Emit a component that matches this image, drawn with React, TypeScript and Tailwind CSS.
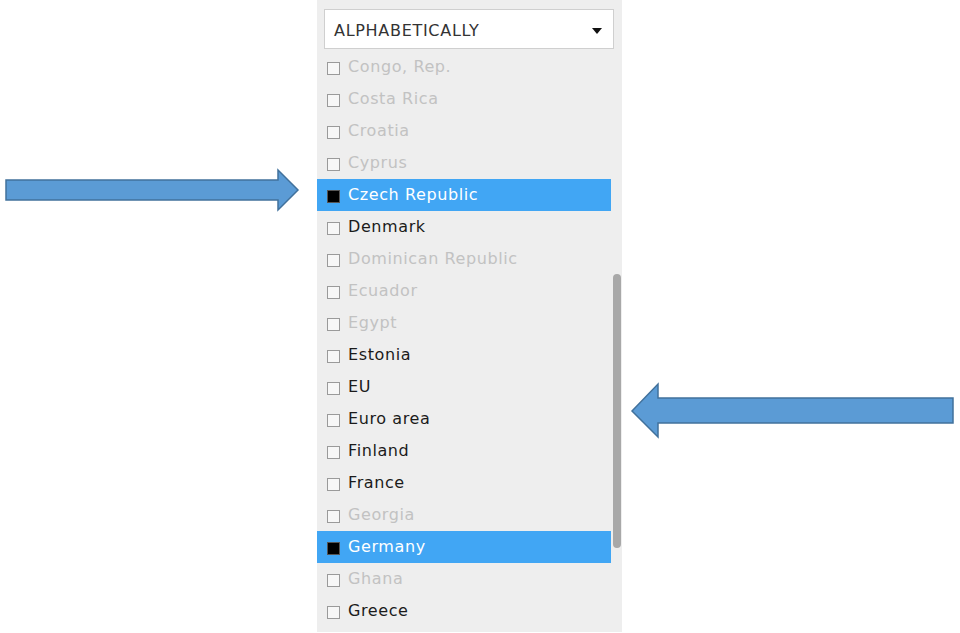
import React from "react";

type Country = { name: string; state: "off" | "on" | "disabled" };

const countries: Country[] = [
  { name: "Congo, Rep.", state: "disabled" },
  { name: "Costa Rica", state: "disabled" },
  { name: "Croatia", state: "disabled" },
  { name: "Cyprus", state: "disabled" },
  { name: "Czech Republic", state: "on" },
  { name: "Denmark", state: "off" },
  { name: "Dominican Republic", state: "disabled" },
  { name: "Ecuador", state: "disabled" },
  { name: "Egypt", state: "disabled" },
  { name: "Estonia", state: "off" },
  { name: "EU", state: "off" },
  { name: "Euro area", state: "off" },
  { name: "Finland", state: "off" },
  { name: "France", state: "off" },
  { name: "Georgia", state: "disabled" },
  { name: "Germany", state: "on" },
  { name: "Ghana", state: "disabled" },
  { name: "Greece", state: "off" },
];

function Row({ c }: { c: Country }) {
  const selected = c.state === "on";
  return (
    <div
      className={
        "flex items-center h-8 w-[294px] pl-[10px] gap-2 " +
        (selected ? "bg-[#41a6f4]" : "")
      }
    >
      <span
        className={
          "w-[13px] h-[13px] shrink-0 border mt-[2px] " +
          (selected ? "bg-black border-[#555]" : "bg-[#f7f7f7] border-[#9a9a9a]")
        }
      />
      <span
        className={
          "text-[16px] tracking-[0.6px] whitespace-nowrap " +
          (selected ? "text-white" : c.state === "off" ? "text-[#1b1b1b]" : "text-[#c2c2c2]")
        }
      >
        {c.name}
      </span>
    </div>
  );
}

export default function App() {
  return (
    <div className="relative w-[960px] h-[633px] bg-white overflow-hidden font-['DejaVu_Sans',Verdana,sans-serif]">
      <div className="ml-[317px] w-[305px] h-[632px] bg-[#eeeeee] flex flex-col">
        <div className="mt-[9px] ml-[7px] w-[290px] h-10 bg-white border border-[#cfcfcf] flex items-center justify-between pl-[9px] pr-[11px] pt-[3px]">
          <span className="text-[16px] tracking-[0.7px] text-[#333]">ALPHABETICALLY</span>
          <svg width="10" height="6" viewBox="0 0 10 6">
            <polygon points="0,0 10,0 5,6" fill="#111" />
          </svg>
        </div>
        <div className="relative mt-[11px] flex-1 overflow-hidden">
          <div className="-mt-[9px] flex flex-col">
            {countries.map((c) => (
              <Row key={c.name} c={c} />
            ))}
          </div>
          <div className="absolute right-[1px] top-[214px] w-2 h-[274px] rounded-full bg-[#a8a8a8]" />
        </div>
      </div>

      <svg className="absolute left-0 top-0 pointer-events-none" width="960" height="633">
        <polygon
          points="6,180 278,180 278,170 298,190 278,210 278,200 6,200"
          fill="#5b9bd5"
          stroke="#41719c"
          strokeWidth="1.5"
        />
        <polygon
          points="632,411 658,384 658,398 953,398 953,423 658,423 658,437"
          fill="#5b9bd5"
          stroke="#41719c"
          strokeWidth="1.5"
        />
      </svg>
    </div>
  );
}
